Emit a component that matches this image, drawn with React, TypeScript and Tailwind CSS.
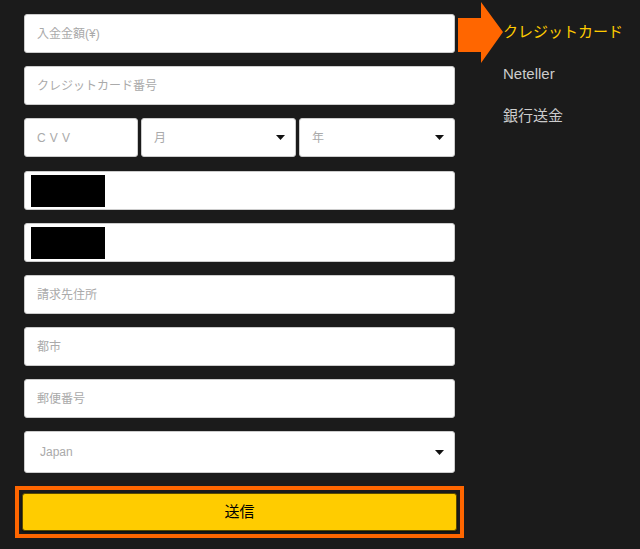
import React from 'react';

const font = { fontFamily: '"Liberation Sans", "Noto Sans CJK JP", sans-serif' };

function Caret() {
  return (
    <svg width="9" height="5" viewBox="0 0 9 5" className="shrink-0">
      <path d="M0 0h9L4.5 5z" fill="#111" />
    </svg>
  );
}

function Field({ label, className = '' }: { label: string; className?: string }) {
  return (
    <div className={`flex h-[39px] items-center rounded-[3px] border border-[#ccc] bg-white px-3 text-[12px] text-[#aaa] ${className}`}>
      {label}
    </div>
  );
}

function SelectField({ label, className = '', tall = false }: { label: string; className?: string; tall?: boolean }) {
  return (
    <div className={`flex ${tall ? 'h-[42px] pl-[15px]' : 'h-[39px] pl-3'} items-center justify-between rounded-[3px] border border-[#ccc] bg-white pr-[10px] text-[12px] text-[#aaa] ${className}`}>
      <span>{label}</span>
      <Caret />
    </div>
  );
}

function Masked() {
  return (
    <div className="flex h-[39px] items-center rounded-[3px] border border-[#ccc] bg-white px-[6px]">
      <div className="h-[32px] w-[74px] bg-black" />
    </div>
  );
}

export default function App() {
  return (
    <div className="h-[549px] w-[640px] overflow-hidden bg-[#1b1b1b]" style={font}>
      <div className="flex">
        <div className="ml-[24px] mt-[14px] flex w-[431px] flex-col gap-[13px]">
          <Field label="入金金額(¥)" />
          <Field label="クレジットカード番号" />
          <div className="mb-px flex gap-[3px]">
            <Field label="CVV" className="w-[114px] tracking-[0.35em]" />
            <SelectField label="月" className="w-[155px]" />
            <SelectField label="年" className="flex-1" />
          </div>
          <Masked />
          <Masked />
          <Field label="請求先住所" />
          <Field label="都市" />
          <Field label="郵便番号" />
          <SelectField label="Japan" tall />
          <div className="-mx-[9px] border-4 border-[#ff6600] p-[3px]">
            <div className="flex h-[38px] items-center justify-center rounded-[3px] border border-[#5a4a00] bg-[#ffcc00] text-[15px] text-black shadow-[0_1px_2px_rgba(0,0,0,0.6)]">
              送信
            </div>
          </div>
        </div>
        <div className="relative ml-[48px] flex flex-col">
          <svg width="46" height="62" viewBox="0 0 46 62" className="absolute left-[-45px] top-[2px]">
            <path d="M0 16h23V0l22 30-22 31V50H0z" fill="#ff6600" />
          </svg>
          <div className="mt-[22px] text-[15px] leading-[20px] text-[#ffcc00]">クレジットカード</div>
          <div className="mt-[22px] text-[15px] leading-[20px] text-[#cccccc]">Neteller</div>
          <div className="mt-[22px] text-[15px] leading-[20px] text-[#cccccc]">銀行送金</div>
        </div>
      </div>
    </div>
  );
}
